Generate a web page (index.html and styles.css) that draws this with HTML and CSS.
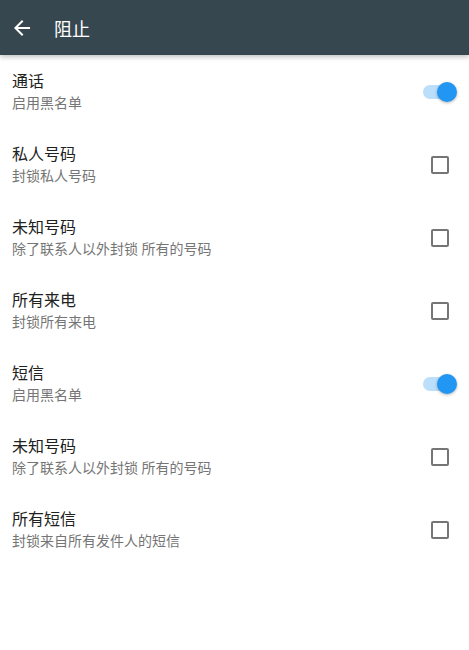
FILE: index.html
```html
<!DOCTYPE html>
<html lang="zh-CN">
<head>
  <meta charset="UTF-8">
  <meta name="viewport" content="width=device-width, initial-scale=1.0">
  <title>阻止</title>
  <link rel="stylesheet" href="styles.css">
</head>
<body>
  <header class="toolbar">
    <svg class="back" width="24" height="24" viewBox="0 0 24 24">
      <path d="M20 11H7.83l5.59-5.59L12 4l-8 8 8 8 1.41-1.41L7.83 13H20v-2z" fill="#fff"/>
    </svg>
    <h1>阻止</h1>
  </header>

  <ul class="list">
    <li class="row">
      <div class="text">
        <div class="title">通话</div>
        <div class="sub">启用黑名单</div>
      </div>
      <span class="switch on"><span class="thumb"></span></span>
    </li>
    <li class="row">
      <div class="text">
        <div class="title">私人号码</div>
        <div class="sub">封锁私人号码</div>
      </div>
      <span class="check"></span>
    </li>
    <li class="row">
      <div class="text">
        <div class="title">未知号码</div>
        <div class="sub">除了联系人以外封锁 所有的号码</div>
      </div>
      <span class="check"></span>
    </li>
    <li class="row">
      <div class="text">
        <div class="title">所有来电</div>
        <div class="sub">封锁所有来电</div>
      </div>
      <span class="check"></span>
    </li>
    <li class="row">
      <div class="text">
        <div class="title">短信</div>
        <div class="sub">启用黑名单</div>
      </div>
      <span class="switch on"><span class="thumb"></span></span>
    </li>
    <li class="row">
      <div class="text">
        <div class="title">未知号码</div>
        <div class="sub">除了联系人以外封锁 所有的号码</div>
      </div>
      <span class="check"></span>
    </li>
    <li class="row">
      <div class="text">
        <div class="title">所有短信</div>
        <div class="sub">封锁来自所有发件人的短信</div>
      </div>
      <span class="check"></span>
    </li>
  </ul>
</body>
</html>
```

FILE: styles.css
```css
body {
  margin: 0;
  background: #fff;
  font-family: Roboto, "Noto Sans CJK SC", sans-serif;
}
.toolbar {
  height: 55px;
  background: #37474f;
  display: flex;
  align-items: center;
  padding-left: 10px;
  box-shadow: 0 2px 5px rgba(0, 0, 0, 0.25);
  position: relative;
}
.back {
  display: block;
}
.toolbar h1 {
  margin: 0 0 0 20px;
  color: #fff;
  font-size: 18px;
  font-weight: normal;
}
.list {
  list-style: none;
  margin: 0;
  padding: 0;
}
.row {
  height: 73px;
  display: flex;
  align-items: center;
  padding: 0 12px;
  box-sizing: border-box;
}
.text {
  flex: 1;
  margin-top: 2px;
}
.title {
  font-size: 16px;
  line-height: 20px;
  color: #212121;
}
.sub {
  font-size: 14px;
  line-height: 20px;
  color: #757575;
  margin-top: 1px;
}
.check {
  width: 14px;
  height: 14px;
  border: 2px solid #757575;
  border-radius: 2px;
  margin-right: 8px;
}
.switch {
  position: relative;
  width: 28px;
  height: 14px;
  border-radius: 7px;
  background: #bbdefb;
  margin-right: 6px;
}
.thumb {
  position: absolute;
  left: 14px;
  top: -3px;
  width: 20px;
  height: 20px;
  border-radius: 50%;
  background: #2196f3;
  box-shadow: 0 1px 3px rgba(0, 0, 0, 0.3);
}
```
